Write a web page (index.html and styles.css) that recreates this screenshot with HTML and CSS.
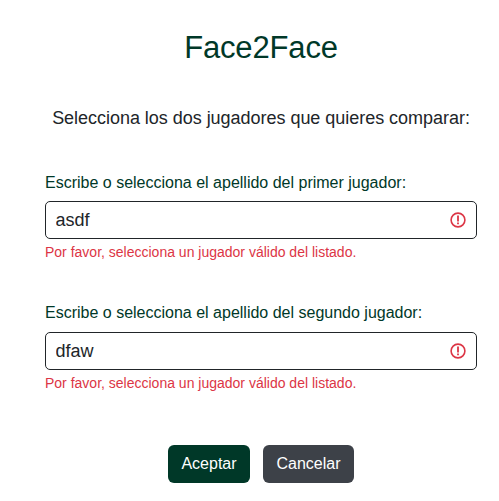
FILE: index.html
```html
<!DOCTYPE html>
<html lang="es">
<head>
<meta charset="utf-8">
<title>Face2Face</title>
<link rel="stylesheet" href="styles.css">
</head>
<body>
<main>
<h1>Face2Face</h1>
<p class="intro">Selecciona los dos jugadores que quieres comparar:</p>
<form>
<div class="field">
<label for="a">Escribe o selecciona el apellido del primer jugador:</label>
<div class="control"><input id="a" type="text" value="asdf"><svg viewBox="0 0 18 18" width="18" height="18" fill="none" stroke="#dc3545"><circle cx="9" cy="9" r="6.9" stroke-width="1.6"/><path stroke-width="1.8" d="M9 4.4v6.2M9 11.6v1.7"/></svg></div>
<p class="error">Por favor, selecciona un jugador válido del listado.</p>
</div>
<div class="field">
<label for="b">Escribe o selecciona el apellido del segundo jugador:</label>
<div class="control"><input id="b" type="text" value="dfaw"><svg viewBox="0 0 18 18" width="18" height="18" fill="none" stroke="#dc3545"><circle cx="9" cy="9" r="6.9" stroke-width="1.6"/><path stroke-width="1.8" d="M9 4.4v6.2M9 11.6v1.7"/></svg></div>
<p class="error">Por favor, selecciona un jugador válido del listado.</p>
</div>
<div class="actions"><button class="accept" type="button">Aceptar</button><button class="cancel" type="button">Cancelar</button></div>
</form>
</main>
</body>
</html>
```
FILE: styles.css
```css
* { box-sizing: border-box; }
body { margin: 0; background: #fff; color: #212529; font: 16px/24px "Liberation Sans", Arial, sans-serif; }
main { width: 432px; margin-left: 45px; padding-top: 29px; }
h1 { margin: 0; font-size: 31px; line-height: 38px; font-weight: 400; letter-spacing: -.15px; text-align: center; color: #003828; }
.intro { margin: 38px 0 0; font-size: 18px; line-height: 27px; letter-spacing: -.03px; text-align: center; white-space: nowrap; }
form { margin-top: 39px; }
.field { height: 92px; margin-bottom: 38px; }
.field + .field { margin-bottom: 52px; }
label { display: block; height: 30px; color: #003828; }
.field + .field label { height: 31px; }
.control { display: flex; align-items: center; height: 38px; padding: 0 9px 0 9.5px; border: 1px solid #212529; border-radius: 5px; }
input { flex: 1; min-width: 0; padding: 0; border: 0; outline: 0; background: none; font: 18px/24px "Liberation Sans", Arial, sans-serif; color: #212529; }
.error { margin: 3px 0 0; font-size: 14px; line-height: 21px; color: #dc3545; }
.actions { display: flex; justify-content: center; gap: 13px; }
button { height: 38px; padding: 0; border: 0; border-radius: 6px; font: 16px/24px "Liberation Sans", Arial, sans-serif; color: #fff; }
.accept { width: 82px; background: #003828; }
.cancel { width: 91px; background: #3d4148; }
```
